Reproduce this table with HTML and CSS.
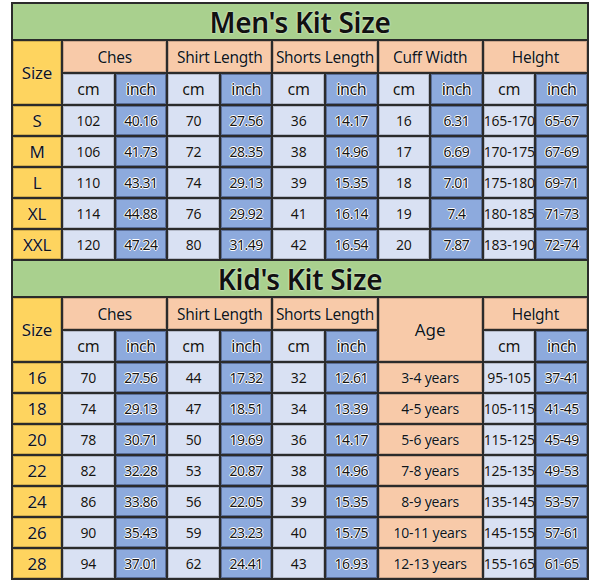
FILE: index.html
```html
<!DOCTYPE html>
<html>
<head>
<meta charset="utf-8">
<link rel="stylesheet" href="styles.css">
</head>
<body>
<div class="sheet">
<table class="chart">
  <colgroup>
    <col class="c-size">
    <col><col><col><col><col><col><col><col><col><col>
  </colgroup>
  <tbody>
    <tr class="r-title"><td class="title" colspan="11">Men's Kit Size</td></tr>
    <tr class="r-h1">
      <td class="size" rowspan="2">Size</td>
      <td class="head" colspan="2">Ches</td>
      <td class="head" colspan="2">Shirt Length</td>
      <td class="head" colspan="2">Shorts Length</td>
      <td class="head" colspan="2">Cuff Width</td>
      <td class="head" colspan="2">Helght</td>
    </tr>
    <tr class="r-h2">
      <td class="cm unit">cm</td><td class="in unit">inch</td>
      <td class="cm unit">cm</td><td class="in unit">inch</td>
      <td class="cm unit">cm</td><td class="in unit">inch</td>
      <td class="cm unit">cm</td><td class="in unit">inch</td>
      <td class="cm unit">cm</td><td class="in unit">inch</td>
    </tr>
    <tr class="r-d"><td class="size">S</td><td class="cm">102</td><td class="in">40.16</td><td class="cm">70</td><td class="in">27.56</td><td class="cm">36</td><td class="in">14.17</td><td class="cm">16</td><td class="in">6.31</td><td class="cm">165-170</td><td class="in">65-67</td></tr>
    <tr class="r-d"><td class="size">M</td><td class="cm">106</td><td class="in">41.73</td><td class="cm">72</td><td class="in">28.35</td><td class="cm">38</td><td class="in">14.96</td><td class="cm">17</td><td class="in">6.69</td><td class="cm">170-175</td><td class="in">67-69</td></tr>
    <tr class="r-d"><td class="size">L</td><td class="cm">110</td><td class="in">43.31</td><td class="cm">74</td><td class="in">29.13</td><td class="cm">39</td><td class="in">15.35</td><td class="cm">18</td><td class="in">7.01</td><td class="cm">175-180</td><td class="in">69-71</td></tr>
    <tr class="r-d"><td class="size">XL</td><td class="cm">114</td><td class="in">44.88</td><td class="cm">76</td><td class="in">29.92</td><td class="cm">41</td><td class="in">16.14</td><td class="cm">19</td><td class="in">7.4</td><td class="cm">180-185</td><td class="in">71-73</td></tr>
    <tr class="r-d"><td class="size">XXL</td><td class="cm">120</td><td class="in">47.24</td><td class="cm">80</td><td class="in">31.49</td><td class="cm">42</td><td class="in">16.54</td><td class="cm">20</td><td class="in">7.87</td><td class="cm">183-190</td><td class="in">72-74</td></tr>

    <tr class="r-title"><td class="title" colspan="11">Kid's Kit Size</td></tr>
    <tr class="r-h1">
      <td class="size" rowspan="2">Size</td>
      <td class="head" colspan="2">Ches</td>
      <td class="head" colspan="2">Shirt Length</td>
      <td class="head" colspan="2">Shorts Length</td>
      <td class="head age-h" colspan="2" rowspan="2">Age</td>
      <td class="head" colspan="2">Helght</td>
    </tr>
    <tr class="r-h2">
      <td class="cm unit">cm</td><td class="in unit">inch</td>
      <td class="cm unit">cm</td><td class="in unit">inch</td>
      <td class="cm unit">cm</td><td class="in unit">inch</td>
      <td class="cm unit">cm</td><td class="in unit">inch</td>
    </tr>
    <tr class="r-d"><td class="size">16</td><td class="cm">70</td><td class="in">27.56</td><td class="cm">44</td><td class="in">17.32</td><td class="cm">32</td><td class="in">12.61</td><td class="age" colspan="2">3-4 years</td><td class="cm">95-105</td><td class="in">37-41</td></tr>
    <tr class="r-d"><td class="size">18</td><td class="cm">74</td><td class="in">29.13</td><td class="cm">47</td><td class="in">18.51</td><td class="cm">34</td><td class="in">13.39</td><td class="age" colspan="2">4-5 years</td><td class="cm">105-115</td><td class="in">41-45</td></tr>
    <tr class="r-d"><td class="size">20</td><td class="cm">78</td><td class="in">30.71</td><td class="cm">50</td><td class="in">19.69</td><td class="cm">36</td><td class="in">14.17</td><td class="age" colspan="2">5-6 years</td><td class="cm">115-125</td><td class="in">45-49</td></tr>
    <tr class="r-d"><td class="size">22</td><td class="cm">82</td><td class="in">32.28</td><td class="cm">53</td><td class="in">20.87</td><td class="cm">38</td><td class="in">14.96</td><td class="age" colspan="2">7-8 years</td><td class="cm">125-135</td><td class="in">49-53</td></tr>
    <tr class="r-d"><td class="size">24</td><td class="cm">86</td><td class="in">33.86</td><td class="cm">56</td><td class="in">22.05</td><td class="cm">39</td><td class="in">15.35</td><td class="age" colspan="2">8-9 years</td><td class="cm">135-145</td><td class="in">53-57</td></tr>
    <tr class="r-d"><td class="size">26</td><td class="cm">90</td><td class="in">35.43</td><td class="cm">59</td><td class="in">23.23</td><td class="cm">40</td><td class="in">15.75</td><td class="age" colspan="2">10-11 years</td><td class="cm">145-155</td><td class="in">57-61</td></tr>
    <tr class="r-d"><td class="size">28</td><td class="cm">94</td><td class="in">37.01</td><td class="cm">62</td><td class="in">24.41</td><td class="cm">43</td><td class="in">16.93</td><td class="age" colspan="2">12-13 years</td><td class="cm">155-165</td><td class="in">61-65</td></tr>
  </tbody>
</table>
</div>
</body>
</html>
```

FILE: styles.css
```css
html, body {
  margin: 0;
  padding: 0;
  background: #ffffff;
}

.sheet {
  padding: 2px 0 0 11px;
}

.chart {
  width: 578px;
  table-layout: fixed;
  border-collapse: separate;
  border-spacing: 2px;
  background: #2b2b2b;
  font-family: "Noto Sans", "Open Sans", sans-serif;
  color: #141414;
}

.c-size { width: 48px; }

.chart td {
  padding: 0;
  text-align: center;
  vertical-align: middle;
  white-space: nowrap;
  overflow: hidden;
  font-size: 14px;
  line-height: 18px;
  letter-spacing: -0.2px;
  box-shadow: inset 0 0 0 1px rgba(0, 0, 0, 0.18);
  text-shadow: 0 0 1px #fff;
}

.chart .r-title td { height: 35px; }
.chart .r-h1 td { height: 31px; }
.chart .r-h2 td { height: 30px; }
.chart .r-d td { height: 29px; }

.chart .title {
  background: #a9d08e;
  font-size: 28px;
  font-weight: 600;
  line-height: 34px;
  letter-spacing: -0.3px;
  overflow: visible;
  color: #111;
  text-shadow: 0 0 2px #fff;
  box-shadow: none;
}

.chart .size {
  background: #fed45f;
  font-size: 17px;
}

.chart .head {
  background: #f8caa9;
  font-size: 15.5px;
  letter-spacing: -0.3px;
}

.chart .age-h { font-size: 17px; letter-spacing: 0; }

.chart .cm {
  background: #d9e1f3;
}

.chart .in {
  background: #8daadd;
  box-shadow: inset 0 0 0 1px rgba(30, 40, 70, 0.45);
  text-shadow: 1px 0 0 #fff, -1px 0 0 #fff, 0 1px 0 #fff, 0 -1px 0 #fff;
  letter-spacing: -0.5px;
}

.chart .unit {
  font-size: 16px;
}

.chart .age {
  background: #f8caa9;
  font-size: 14px;
}
```
